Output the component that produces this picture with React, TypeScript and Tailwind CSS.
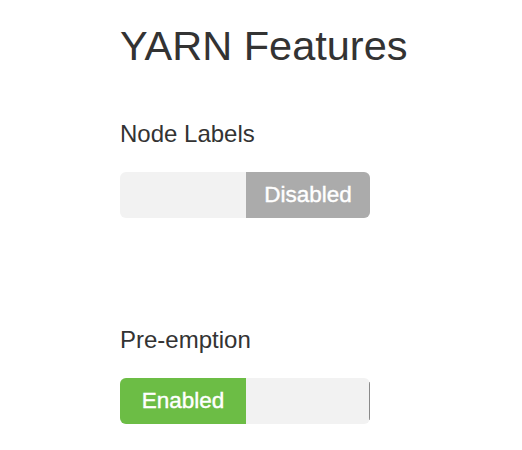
import { useState } from "react";

//Interface
interface ToggleProps {
    label: string;
    enabled: boolean;
    onToggle?: () => void;
    showEdge?: boolean;
}

const FeatureToggle = ({ label, enabled, onToggle, showEdge = false }: ToggleProps) => {
    return (
        <div>
            <h4 className="text-[24px] leading-[24px] text-[#333333]">{label}</h4>
            <button
                className="relative mt-[26px] flex h-[46px] w-[250px] overflow-hidden rounded-[6px] bg-[#f2f2f2] text-[22.5px] leading-none text-white [-webkit-text-stroke:0.4px_white]"
                onClick={onToggle}
            >
                {enabled ? (
                    <>
                        <span className="flex h-full w-[126px] items-center justify-center bg-[#6cbd45]">Enabled</span>
                        <span className="h-full flex-1" />
                    </>
                ) : (
                    <>
                        <span className="h-full w-[126px]" />
                        <span className="flex h-full flex-1 items-center justify-center bg-[#ababab]">Disabled</span>
                    </>
                )}
                {showEdge && <span className="absolute right-0 top-[4px] bottom-[4px] w-px bg-[#8a8a8a]" />}
            </button>
        </div>
    );
};

export default function App() {
    //State
    const [nodeLabels, setNodeLabels] = useState<boolean>(false);
    const [preemption, setPreemption] = useState<boolean>(true);

    return (
        <div className="min-h-[450px] w-full bg-white pl-[120px] pt-[25px]" style={{ fontFamily: '"Liberation Sans", Arial, sans-serif' }}>
            <h1 className="text-[41.5px] leading-[41px] text-[#333333]">YARN Features</h1>
            <div className="mt-[56px]">
                <FeatureToggle label="Node Labels" enabled={nodeLabels} onToggle={() => setNodeLabels(!nodeLabels)} />
            </div>
            <div className="mt-[110px]">
                <FeatureToggle label="Pre-emption" enabled={preemption} onToggle={() => setPreemption(!preemption)} showEdge />
            </div>
        </div>
    );
}
